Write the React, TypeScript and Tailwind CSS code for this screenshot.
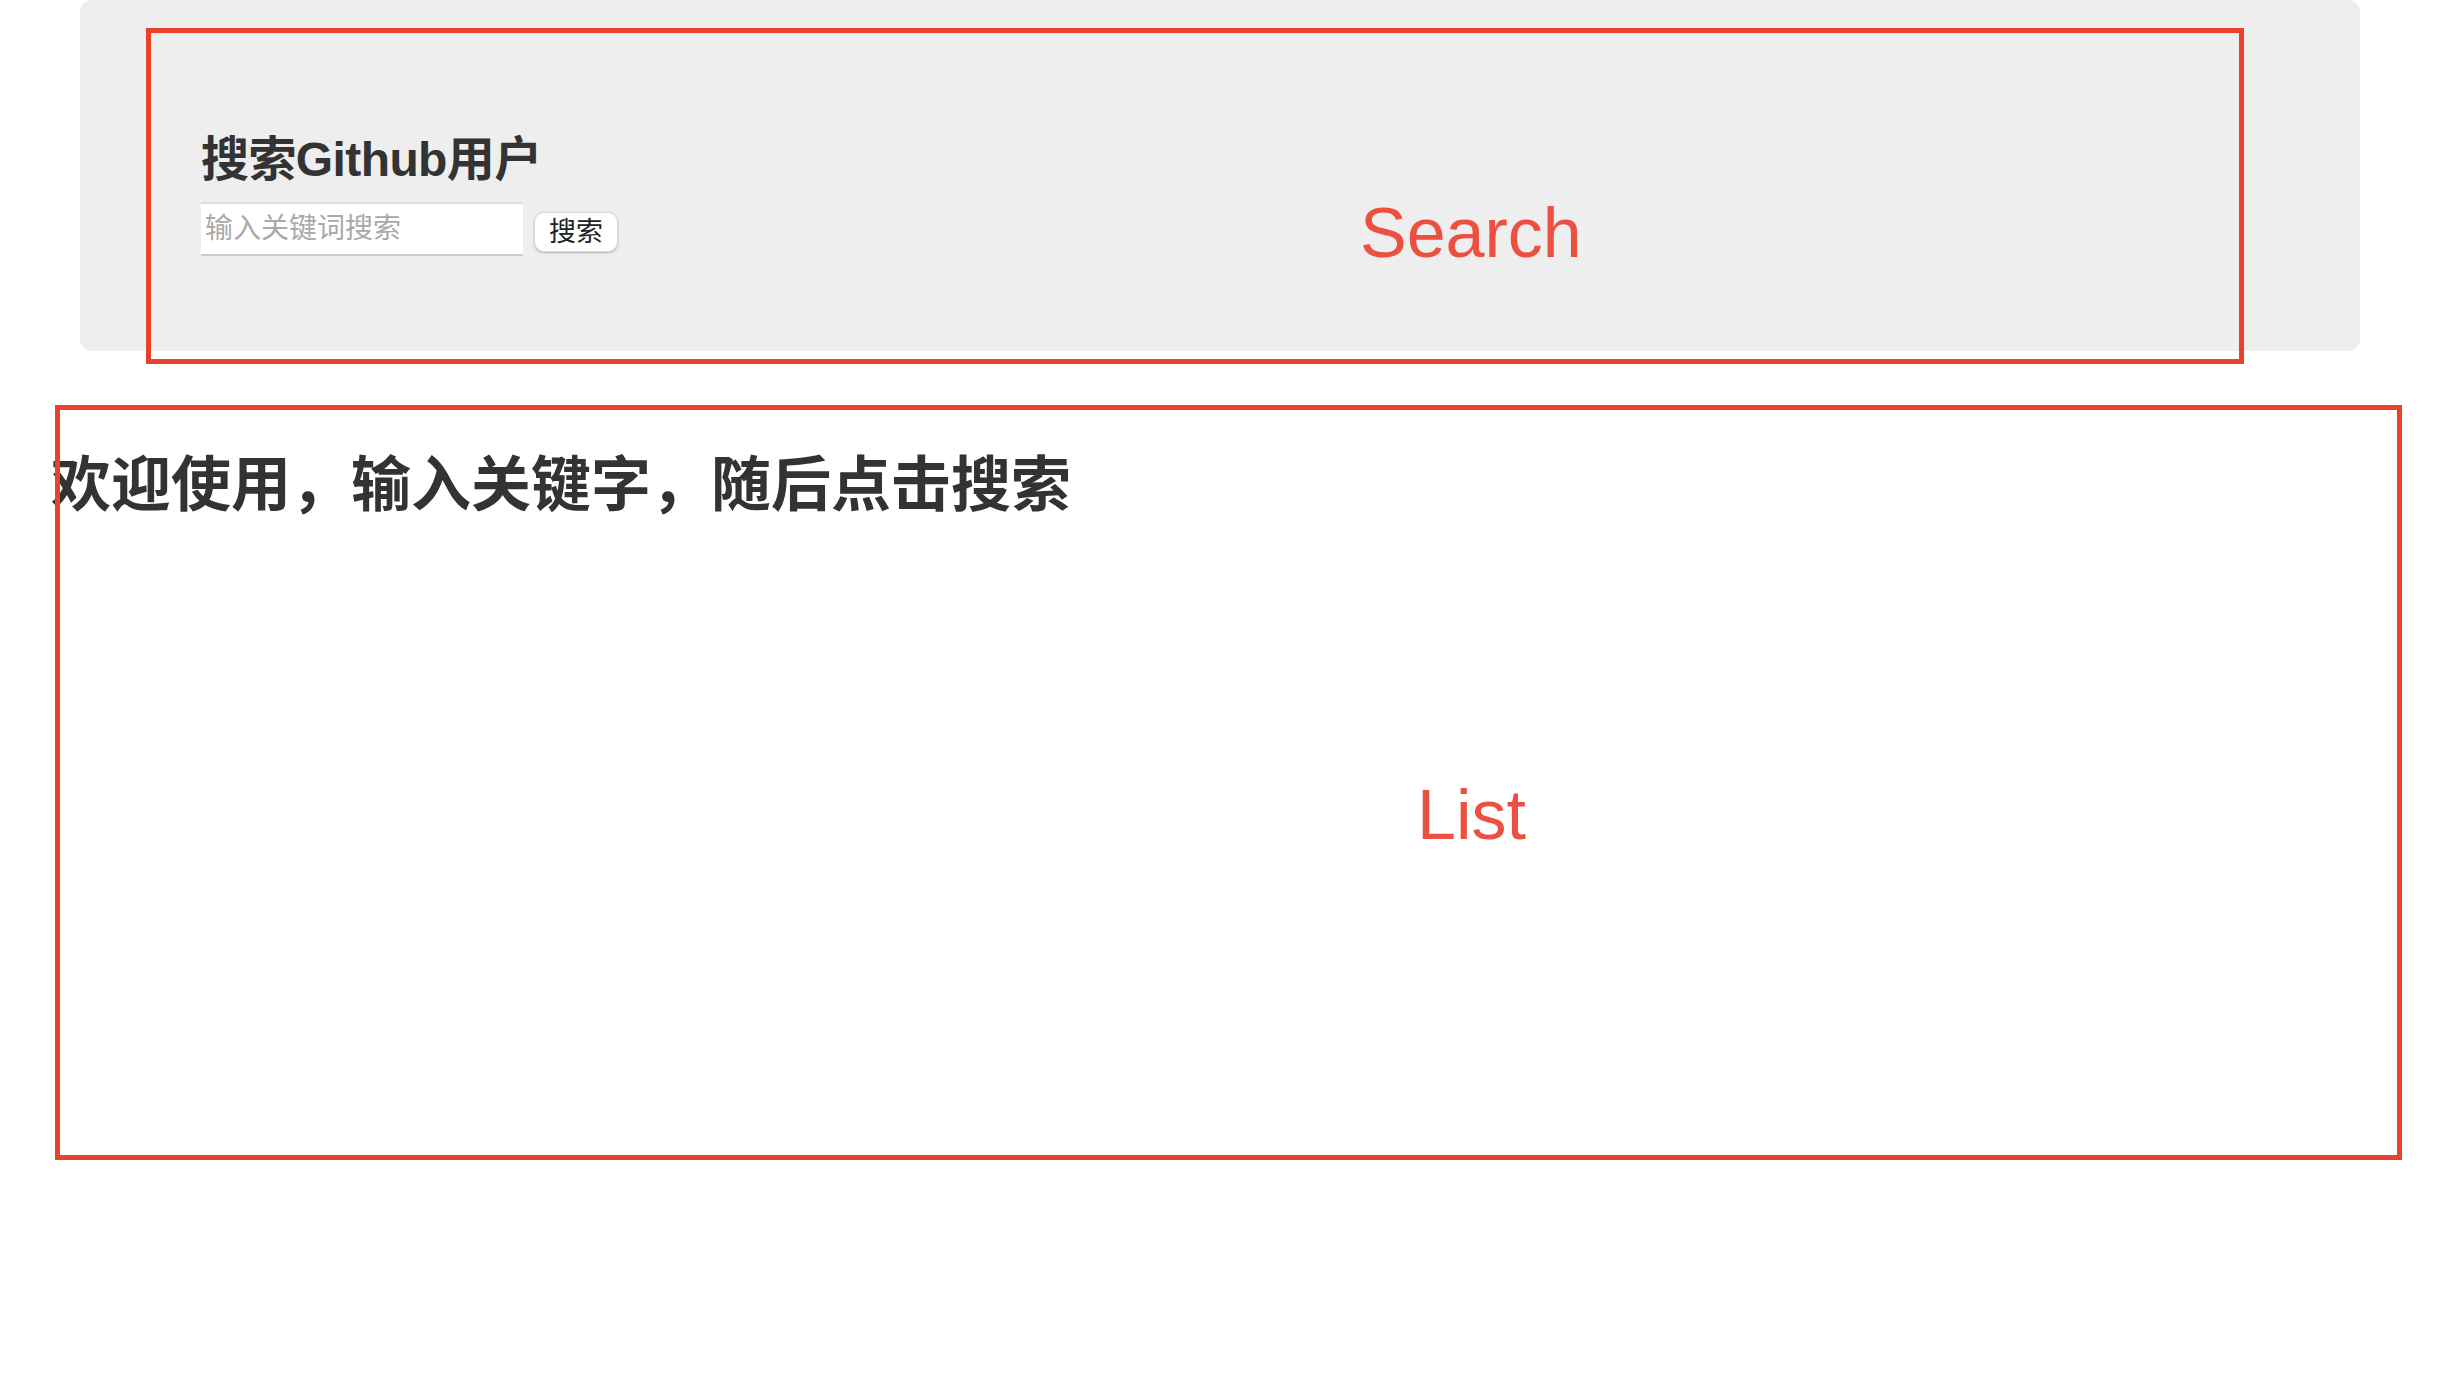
import React from "react";

export default function App() {
  return (
    <div
      className="relative w-[2448px] h-[1396px] overflow-hidden bg-white text-[#333333]"
      style={{ fontFamily: '"Liberation Sans", "Noto Sans CJK SC", sans-serif' }}
    >
      {/* Jumbotron / Search */}
      <div className="ml-[80px] mr-[88px] h-[351px] rounded-[12px] bg-[#eeeeee] pl-[121px] pt-[133px]">
        <h3 className="m-0 text-[48px] font-bold leading-[53px] tracking-[-0.6px] text-[#333333]">
          搜索Github用户
        </h3>
        <div className="mt-[16px] flex items-end">
          <input
            type="text"
            placeholder="输入关键词搜索"
            className="h-[54px] w-[322px] border-t-2 border-b-2 border-t-[#dddddd] border-b-[#cccccc] bg-white pl-[4px] text-[28px] text-[#333333] outline-none placeholder:text-[#a9a9a9]"
          />
          <button className="mb-[4px] ml-[11px] flex h-[40px] w-[84px] items-center justify-center rounded-[10px] border border-[#dadada] bg-white text-[27px] leading-none text-[#222222] shadow-[0_1px_2px_rgba(0,0,0,0.25)]">
            搜索
          </button>
        </div>
      </div>

      {/* List */}
      <h2 className="m-0 ml-[51px] mt-[102px] text-[60px] font-bold leading-[66px] text-[#333333]">
        欢迎使用，输入关键字，随后点击搜索
      </h2>

      {/* Annotation overlays */}
      <div className="pointer-events-none absolute left-[146px] top-[28px] h-[336px] w-[2098px] border-[5px] border-[#e9412a]" />
      <div className="pointer-events-none absolute left-[1360px] top-[198px] text-[70px] leading-[70px] text-[#ec5040]">
        Search
      </div>
      <div className="pointer-events-none absolute left-[55px] top-[405px] h-[755px] w-[2347px] border-[5px] border-[#e9412a]" />
      <div className="pointer-events-none absolute left-[1417px] top-[780px] text-[70px] leading-[70px] text-[#ec5040]">
        List
      </div>
    </div>
  );
}
